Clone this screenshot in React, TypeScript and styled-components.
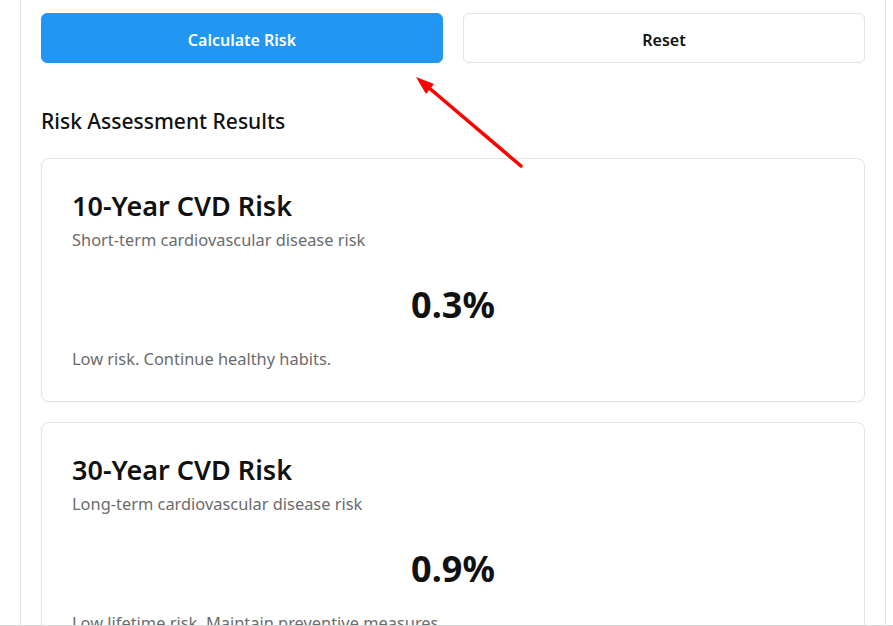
import React from "react";
import styled, { createGlobalStyle } from "styled-components";

const Global = createGlobalStyle`
  html, body { margin: 0; padding: 0; background: #ffffff; }
  body { font-family: "Noto Sans", "Open Sans", sans-serif; color: #111; overflow: hidden; }
  * { box-sizing: border-box; }
`;

const Page = styled.div`
  height: 626px;
  overflow: hidden;
  position: relative;
`;

const Panel = styled.div`
  margin-left: 20px;
  width: 866px;
  min-height: 700px;
  border-left: 1px solid #e3e3e3;
  border-right: 1px solid #e3e3e3;
  padding: 13px 20px 20px 20px;
`;

const ButtonRow = styled.div`
  display: grid;
  grid-template-columns: 1fr 1fr;
  gap: 20px;
`;

const Button = styled.button<{ $primary?: boolean }>`
  height: 50px;
  padding-top: 4px;
  border-radius: 6px;
  font-family: inherit;
  font-size: 16px;
  font-weight: 600;
  cursor: pointer;
  border: 1px solid ${(p) => (p.$primary ? "#2196f3" : "#e2e2e2")};
  background: ${(p) => (p.$primary ? "#2196f3" : "#ffffff")};
  color: ${(p) => (p.$primary ? "#ffffff" : "#111111")};
`;

const SectionTitle = styled.h2`
  margin: 44px 0 23px 0;
  font-size: 21px;
  font-weight: 500;
  line-height: 28px;
  color: #111;
`;

const Cards = styled.div`
  display: flex;
  flex-direction: column;
  gap: 20px;
`;

const Card = styled.div`
  border: 1px solid #e3e3e3;
  border-radius: 8px;
  padding: 29px 30px 30px 30px;
  box-shadow: 0 1px 2px rgba(0, 0, 0, 0.04);
  background: #fff;
`;

const CardTitle = styled.h3`
  margin: 0;
  font-size: 27px;
  font-weight: 600;
  line-height: 36px;
  color: #111;
`;

const CardSub = styled.p`
  margin: 4px 0 0 0;
  font-size: 16.4px;
  line-height: 24px;
  color: #6b6b6b;
`;

const Value = styled.div`
  margin-top: 34px;
  text-align: center;
  font-size: 36px;
  font-weight: 700;
  line-height: 38px;
  color: #111;
`;

const Note = styled.p`
  margin: 23px 0 0 0;
  font-size: 16.4px;
  line-height: 24px;
  color: #6b6b6b;
`;

const Annotation = styled.svg`
  position: absolute;
  left: 0;
  top: 0;
  pointer-events: none;
`;

const BottomEdge = styled.div`
  position: absolute;
  left: 0;
  right: 0;
  bottom: 0;
  height: 1px;
  background: #d6d6d6;
`;

const results = [
  {
    title: "10-Year CVD Risk",
    sub: "Short-term cardiovascular disease risk",
    value: "0.3%",
    note: "Low risk. Continue healthy habits.",
  },
  {
    title: "30-Year CVD Risk",
    sub: "Long-term cardiovascular disease risk",
    value: "0.9%",
    note: "Low lifetime risk. Maintain preventive measures.",
  },
];

export default function App() {
  return (
    <Page>
      <Global />
      <Panel>
        <ButtonRow>
          <Button $primary>Calculate Risk</Button>
          <Button>Reset</Button>
        </ButtonRow>
        <SectionTitle>Risk Assessment Results</SectionTitle>
        <Cards>
          {results.map((r) => (
            <Card key={r.title}>
              <CardTitle>{r.title}</CardTitle>
              <CardSub>{r.sub}</CardSub>
              <Value>{r.value}</Value>
              <Note>{r.note}</Note>
            </Card>
          ))}
        </Cards>
      </Panel>
      <Annotation width="893" height="626" viewBox="0 0 893 626">
        <line x1="521" y1="166" x2="428" y2="87" stroke="#ff0000" strokeWidth="3.5" strokeLinecap="round" />
        <polygon points="416,77 434,84 426,94" fill="#ff0000" />
      </Annotation>
      <BottomEdge />
    </Page>
  );
}
